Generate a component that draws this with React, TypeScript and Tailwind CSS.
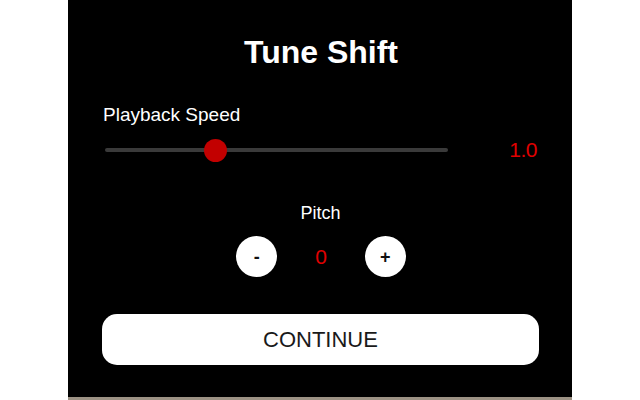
import React from "react";

export default function App() {
  const min = 0.5;
  const max = 2;
  const value = 1.0;
  const trackW = 343;
  const thumbCenter = 110;
  return (
    <div className="w-[640px] h-[400px] bg-white" style={{ fontFamily: '"Liberation Sans", Arial, sans-serif' }}>
      <div className="ml-[68px] w-[504px] h-[400px] bg-black border-b-[3px] border-[#9c9284] px-[34px] pt-[34px] flex flex-col">
        <h1 className="text-[32px] leading-[36px] font-bold text-white text-center pl-[2px]">Tune Shift</h1>
        <div className="mt-[34px] text-[19px] leading-[22px] text-white pl-[1px]">Playback Speed</div>
        <div className="mt-[12px] h-[24px] flex items-center justify-between">
          <div className="relative ml-[3px] h-[24px] flex items-center" style={{ width: trackW }} data-min={min} data-max={max}>
            <div className="w-full h-[4px] rounded-full bg-[#3a3a3a]" />
            <div
              className="absolute top-[0.5px] w-[23px] h-[23px] rounded-full bg-[#c20000]"
              style={{ left: thumbCenter - 11.5 }}
            />
          </div>
          <div className="text-[21px] leading-[24px] text-[#e00000] pr-[1px] tracking-[-0.5px]">{value.toFixed(1)}</div>
        </div>
        <div className="mt-[41px] text-[18px] leading-[21px] text-white text-center pl-[1px]">Pitch</div>
        <div className="mt-[12px] flex items-center justify-center gap-[38px] pl-[2px]">
          <button className="w-[41px] h-[41px] rounded-full bg-white text-[#111] text-[18px] font-bold flex items-center justify-center leading-none">-</button>
          <span className="text-[21px] leading-[24px] text-[#e00000]">0</span>
          <button className="w-[41px] h-[41px] rounded-full bg-white text-[#111] text-[18px] font-bold flex items-center justify-center leading-none">+</button>
        </div>
        <button className="mt-[37px] w-[437px] h-[51px] rounded-[15px] bg-white text-[#1a1a1a] text-[22px] flex items-center justify-center">CONTINUE</button>
      </div>
    </div>
  );
}
